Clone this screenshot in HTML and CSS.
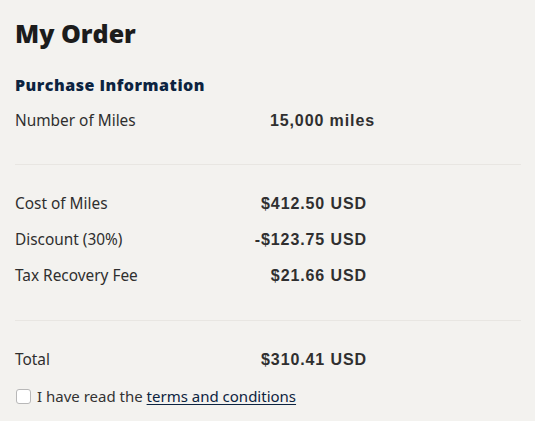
FILE: index.html
```html
<!DOCTYPE html>
<html lang="en">
<head>
  <meta charset="UTF-8">
  <meta name="viewport" content="width=device-width, initial-scale=1.0">
  <title>My Order</title>
  <link rel="stylesheet" href="styles.css">
</head>
<body>

<div class="order">
  <h1>My Order</h1>

  <div class="section first">
    <h2>Purchase Information</h2>
    <div class="row">
      <span class="label">Number of Miles</span>
      <span class="value miles">15,000 miles</span>
    </div>
  </div>

  <div class="section">
    <div class="row">
      <span class="label">Cost of Miles</span>
      <span class="value">$412.50 USD</span>
    </div>
    <div class="row">
      <span class="label">Discount (30%)</span>
      <span class="value">-$123.75 USD</span>
    </div>
    <div class="row">
      <span class="label">Tax Recovery Fee</span>
      <span class="value">$21.66 USD</span>
    </div>
  </div>

  <div class="section last">
    <div class="row">
      <span class="label">Total</span>
      <span class="value">$310.41 USD</span>
    </div>
  </div>

  <label class="agree">
    <input type="checkbox">
    <span>I have read the <a href="#">terms and conditions</a></span>
  </label>
</div>

</body>
</html>
```

FILE: styles.css
```css
* {
  box-sizing: border-box;
  margin: 0;
  padding: 0;
}

html, body {
  height: 100%;
  background: #f3f2ef;
  font-family: "Noto Sans", "Liberation Sans", sans-serif;
  color: #333;
  overflow: hidden;
}

.order {
  width: 521px;
  padding: 17px 0 0 15px;
}

h1 {
  font-family: "Open Sans", "Noto Sans", sans-serif;
  font-size: 25px;
  line-height: 32px;
  font-weight: 800;
  color: #1c1c1c;
}

h2 {
  margin-top: 26px;
  margin-bottom: 8px;
  font-family: "Open Sans", "Noto Sans", sans-serif;
  font-size: 16px;
  line-height: 20px;
  font-weight: 800;
  letter-spacing: 0.5px;
  color: #0c2340;
}

.section {
  padding: 21px 0 26px;
  border-bottom: 1px solid #e8e6e2;
}

.section.first {
  padding-top: 0;
  padding-bottom: 25px;
}

.section.last {
  padding-top: 21px;
  padding-bottom: 0;
  border-bottom: none;
}

.row {
  display: flex;
  height: 36px;
  line-height: 36px;
  font-size: 15.4px;
  color: #2e2e2e;
}

.label {
  width: 200px;
}

.value {
  width: 152px;
  text-align: right;
  font-family: "Liberation Sans", Arial, sans-serif;
  font-size: 16px;
  font-weight: bold;
  letter-spacing: 0.9px;
  color: #2f2f2f;
}

.value.miles {
  width: 160px;
}

.agree {
  display: flex;
  align-items: center;
  gap: 6px;
  margin-top: 8px;
  font-size: 15px;
  line-height: 20px;
}

.agree input {
  appearance: none;
  width: 15px;
  height: 15px;
  margin-left: 1px;
  background: #fff;
  border: 1px solid #b8b8b8;
  border-radius: 3px;
}

.agree a {
  color: #0c2340;
  text-decoration: underline;
  text-underline-offset: 2px;
}
```
